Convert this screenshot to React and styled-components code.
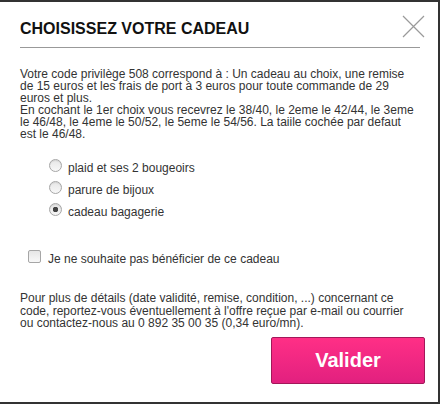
import React, { useState } from 'react';
import styled, { createGlobalStyle } from 'styled-components';

const GlobalStyle = createGlobalStyle`
  html, body {
    margin: 0;
    padding: 0;
    background: #fff;
  }
  body {
    font-family: 'Liberation Sans', Arial, sans-serif;
  }
`;

const Modal = styled.div`
  position: relative;
  width: 440px;
  height: 404px;
  box-sizing: border-box;
  border: 2px solid #333;
  border-left: none;
  padding: 17px 18px 0 20px;
  background: #fff;
`;

const Header = styled.div`
  border-bottom: 1px solid #999;
  padding-bottom: 8px;
`;

const Title = styled.h1`
  margin: 0;
  font-size: 16px;
  line-height: 20px;
  font-weight: 700;
  color: #111;
`;

const CloseButton = styled.button`
  position: absolute;
  top: 13px;
  right: 13px;
  width: 23px;
  height: 23px;
  padding: 0;
  border: none;
  background: none;
  cursor: pointer;
`;

const Text = styled.p`
  margin: ${(p) => p.$margin || '0'};
  font-size: 12px;
  line-height: ${(p) => p.$lineHeight || '12px'};
  color: #333;
  white-space: nowrap;
`;

const Options = styled.div`
  margin: 17px 0 0 29px;
`;

const OptionRow = styled.label`
  display: block;
  height: 22px;
  line-height: 22px;
  font-size: 12px;
  color: #333;
  cursor: pointer;
`;

const Radio = styled.input.attrs({ type: 'radio' })`
  appearance: none;
  -webkit-appearance: none;
  width: 13px;
  height: 13px;
  margin: 0 6px 0 0;
  box-sizing: border-box;
  border: 1px solid #a6a6a6;
  border-radius: 50%;
  vertical-align: baseline;
  background: ${(p) =>
    p.checked
      ? 'radial-gradient(circle, #444 0 2.5px, transparent 3px), linear-gradient(#e4e4e4, #f6f6f6)'
      : 'linear-gradient(#e6e6e6, #f8f8f8)'};
  box-shadow: inset 0 1px 1px rgba(0, 0, 0, 0.08);
`;

const OptOutRow = styled(OptionRow)`
  margin: 25px 0 0 8px;
`;

const Checkbox = styled.input.attrs({ type: 'checkbox' })`
  appearance: none;
  -webkit-appearance: none;
  width: 13px;
  height: 13px;
  margin: 0 7px 0 0;
  box-sizing: border-box;
  border: 1px solid #a6a6a6;
  border-radius: 2px;
  vertical-align: baseline;
  background: linear-gradient(#e6e6e6, #f8f8f8);
`;

const Footer = styled.div`
  display: flex;
  justify-content: flex-end;
  margin: 7px -5px 0 0;
`;

const SubmitButton = styled.button`
  width: 154px;
  height: 47px;
  box-sizing: border-box;
  border: 1px solid #a3175a;
  border-radius: 2px;
  background: linear-gradient(#ff2f86, #e2207f);
  color: #fff;
  font-family: 'Liberation Sans', Arial, sans-serif;
  font-size: 20px;
  font-weight: 700;
  cursor: pointer;
`;

const gifts = ['plaid et ses 2 bougeoirs', 'parure de bijoux', 'cadeau bagagerie'];

export default function App() {
  const [gift, setGift] = useState(2);
  const [optOut, setOptOut] = useState(false);

  return (
    <>
      <GlobalStyle />
      <Modal>
        <Header>
          <Title>CHOISISSEZ VOTRE CADEAU</Title>
        </Header>
        <CloseButton aria-label="Fermer">
          <svg width="23" height="23" viewBox="0 0 23 23">
            <path d="M1 1 L22 22 M22 1 L1 22" stroke="#9a9a9a" strokeWidth="1.2" fill="none" />
          </svg>
        </CloseButton>

        <Text $margin="20px 0 0 0">
          Votre code privilège 508 correspond à : Un cadeau au choix, une remise
          <br />
          de 15 euros et les frais de port à 3 euros pour toute commande de 29
          <br />
          euros et plus.
          <br />
          En cochant le 1er choix vous recevrez le 38/40, le 2eme le 42/44, le 3eme
          <br />
          le 46/48, le 4eme le 50/52, le 5eme le 54/56. La taiile cochée par defaut
          <br />
          est le 46/48.
        </Text>

        <Options>
          {gifts.map((label, i) => (
            <OptionRow key={label}>
              <Radio name="gift" checked={gift === i} onChange={() => setGift(i)} />
              {label}
            </OptionRow>
          ))}
        </Options>

        <OptOutRow>
          <Checkbox checked={optOut} onChange={() => setOptOut(!optOut)} />
          Je ne souhaite pas bénéficier de ce cadeau
        </OptOutRow>

        <Text $margin="22px 0 0 0" $lineHeight="12.5px">
          Pour plus de détails (date validité, remise, condition, ...) concernant ce
          <br />
          code, reportez-vous éventuellement à l'offre reçue par e-mail ou courrier
          <br />
          ou contactez-nous au 0 892 35 00 35 (0,34 euro/mn).
        </Text>

        <Footer>
          <SubmitButton>Valider</SubmitButton>
        </Footer>
      </Modal>
    </>
  );
}
